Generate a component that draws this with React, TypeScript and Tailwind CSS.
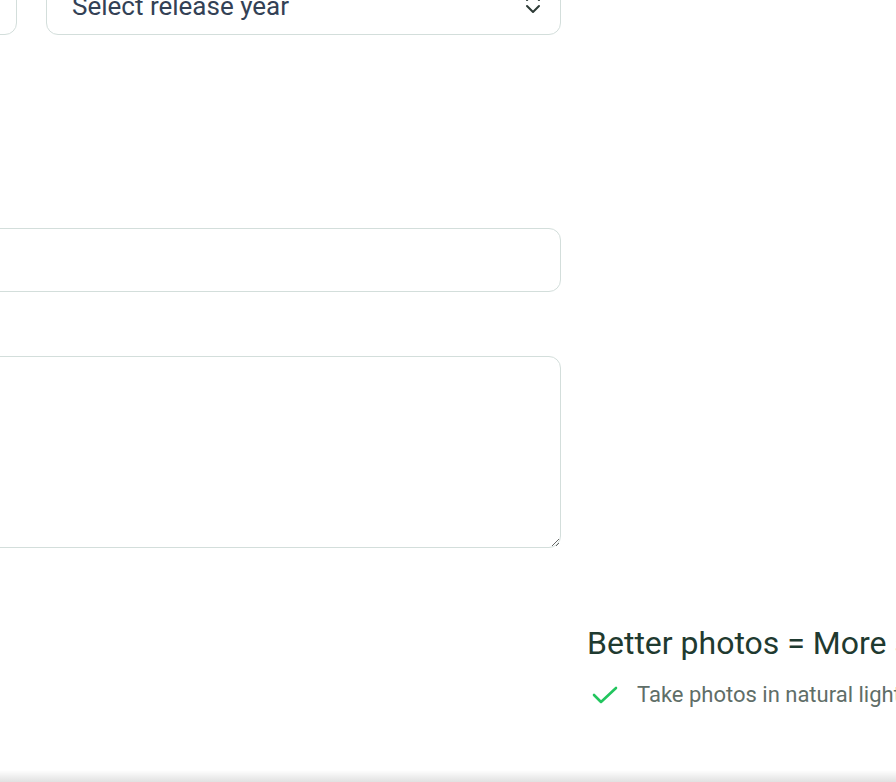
import { useState } from "react";

const fieldBorder = "border border-[#d3dedb] rounded-xl bg-white";

const UpDownIcon = () => (
  <svg
    width="16"
    height="24"
    viewBox="0 0 16 24"
    fill="none"
    stroke="#2d3b36"
    strokeWidth="2"
    strokeLinecap="round"
    strokeLinejoin="round"
    className="absolute right-[20px] top-1/2 -translate-y-1/2 pointer-events-none"
  >
    <path d="M2 9 L8 3 L14 9" />
    <path d="M2 15 L8 21 L14 15" />
  </svg>
);

const CheckIcon = () => (
  <svg
    width="28"
    height="24"
    viewBox="0 0 28 24"
    fill="none"
    stroke="#22c55e"
    strokeWidth="2.6"
    strokeLinecap="round"
    strokeLinejoin="round"
    className="shrink-0"
  >
    <path d="M3 12 L10 19 L25 5" />
  </svg>
);

const tips = ["Take photos in natural light"];

export default function App() {
  const [year, setYear] = useState("");

  return (
    <div className="relative w-[896px] h-[782px] overflow-hidden bg-white font-['Roboto',sans-serif]">
      <div className="flex gap-[26px] -ml-[498px] -mt-[29px]">
        {/* Listing form */}
        <div className="w-[1059px] shrink-0 flex flex-col">
          <div className="grid grid-cols-2 gap-[29px]">
            <div className="relative">
              <select className={`${fieldBorder} appearance-none w-full h-[64px] px-[25px] text-[26px] text-[#334155] outline-none`}>
                <option>Select condition</option>
              </select>
              <UpDownIcon />
            </div>
            <div className="relative">
              <select
                value={year}
                onChange={(e) => setYear(e.target.value)}
                className={`${fieldBorder} appearance-none w-full h-[64px] px-[25px] pt-[6px] text-[26px] text-[#334155] outline-none`}
              >
                <option value="">Select release year</option>
                <option value="2024">2024</option>
                <option value="2023">2023</option>
              </select>
              <UpDownIcon />
            </div>
          </div>

          <input
            type="text"
            className={`${fieldBorder} mt-[193px] w-full h-[64px] px-[25px] text-[22px] outline-none`}
          />

          <textarea
            className={`${fieldBorder} mt-[64px] w-full h-[192px] px-[25px] py-4 text-[22px] outline-none`}
          />
        </div>

        {/* Photo tips */}
        <div className="w-[420px] shrink-0 mt-[651px]">
          <h3 className="text-[32px] leading-[42px] text-[#1f3a30] whitespace-nowrap">
            Better photos = More sales
          </h3>
          <ul className="mt-[14px] flex flex-col gap-3">
            {tips.map((tip) => (
              <li key={tip} className="flex items-center gap-[18px] pl-[4px]">
                <CheckIcon />
                <span className="text-[22px] text-[#5f6e68] whitespace-nowrap">{tip}</span>
              </li>
            ))}
          </ul>
        </div>
      </div>

      {/* shadow from the sticky action bar below */}
      <div className="absolute bottom-0 left-0 right-0 h-[12px] bg-gradient-to-b from-transparent to-black/12" />
    </div>
  );
}
